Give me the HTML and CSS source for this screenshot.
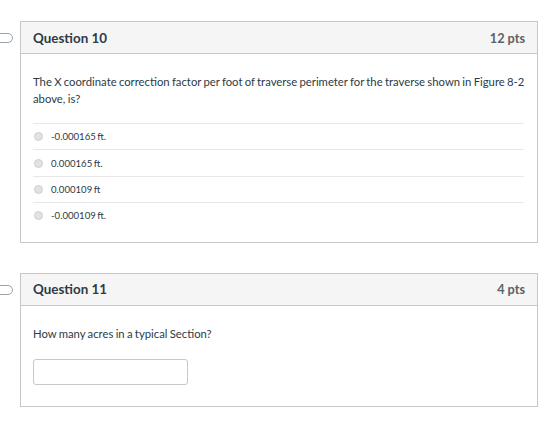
FILE: index.html
```html
<!DOCTYPE html>
<html>
    <head>
        <title>Quiz</title>
        <meta charset="UTF-8" />
        <meta name="viewport" content="width=device-width, initial-scale=1.0" />
        <link rel="stylesheet" href="styles.css">
    </head>
    <body>
        <div class="quiz">
            <div class="question-row">
                <div class="flag-col"><div class="flag"></div></div>
                <div class="question">
                    <div class="question-header">
                        <span class="question-name">Question 10</span>
                        <span class="question-pts">12 pts</span>
                    </div>
                    <div class="question-body">
                        <p class="question-text">The X coordinate correction factor per foot of traverse perimeter for the traverse shown in Figure 8-2 above, is?</p>
                        <div class="answers">
                            <label class="answer"><span class="radio"></span>-0.000165 ft.</label>
                            <label class="answer"><span class="radio"></span>0.000165 ft.</label>
                            <label class="answer"><span class="radio"></span>0.000109 ft</label>
                            <label class="answer"><span class="radio"></span>-0.000109 ft.</label>
                        </div>
                    </div>
                </div>
            </div>

            <div class="question-row">
                <div class="flag-col"><div class="flag"></div></div>
                <div class="question">
                    <div class="question-header">
                        <span class="question-name">Question 11</span>
                        <span class="question-pts">4 pts</span>
                    </div>
                    <div class="question-body short">
                        <p class="question-text">How many acres in a typical Section?</p>
                        <input class="short-answer" type="text">
                    </div>
                </div>
            </div>
        </div>
    </body>
</html>
```

FILE: styles.css
```css
body {
    margin: 0;
    background: #ffffff;
    font-family: Lato, "Open Sans", sans-serif;
    color: #2d3b45;
}

.quiz {
    display: flex;
    flex-direction: column;
    gap: 30px;
    padding-top: 21px;
    width: 538px;
}

.question-row {
    display: flex;
}

.flag-col {
    width: 20px;
    flex-shrink: 0;
    overflow: hidden;
}

.flag {
    margin-top: 12px;
    margin-left: -6px;
    width: 17px;
    height: 8px;
    border: 1px solid #9aa3a9;
    border-radius: 5px;
}

.question {
    flex: 1;
    border: 1px solid #c4c8cb;
}

.question-header {
    display: flex;
    justify-content: space-between;
    align-items: center;
    height: 31px;
    padding: 0 12px 0 12px;
    background: #f5f5f5;
    border-bottom: 1px solid #c4c8cb;
}

.question-name {
    font-size: 13.4px;
    font-weight: bold;
    color: #2d3b45;
}

.question-pts {
    font-size: 12.7px;
    font-weight: bold;
    color: #5b6166;
}

.question-body {
    padding: 19px 13px 13px 12px;
}

.question-text {
    margin: 0 -5px 0 0;
    font-size: 11.3px;
    line-height: 17px;
    word-spacing: -0.6px;
}

.answers {
    margin-top: 16px;
}

.answer {
    display: flex;
    align-items: center;
    height: 25.4px;
    border-top: 1px solid #e8e8e8;
    font-size: 9.6px;
    word-spacing: -1px;
}

.radio {
    width: 7px;
    height: 7px;
    margin: 0 8px 0 1px;
    border: 1px solid #cfcfcf;
    border-radius: 50%;
    background: #e2e2e2;
}

.question-body.short {
    padding-bottom: 21px;
}

.short-answer {
    display: block;
    margin-top: 17px;
    width: 155px;
    height: 26px;
    box-sizing: border-box;
    border: 1px solid #c8c8c8;
    border-radius: 3px;
}
```
